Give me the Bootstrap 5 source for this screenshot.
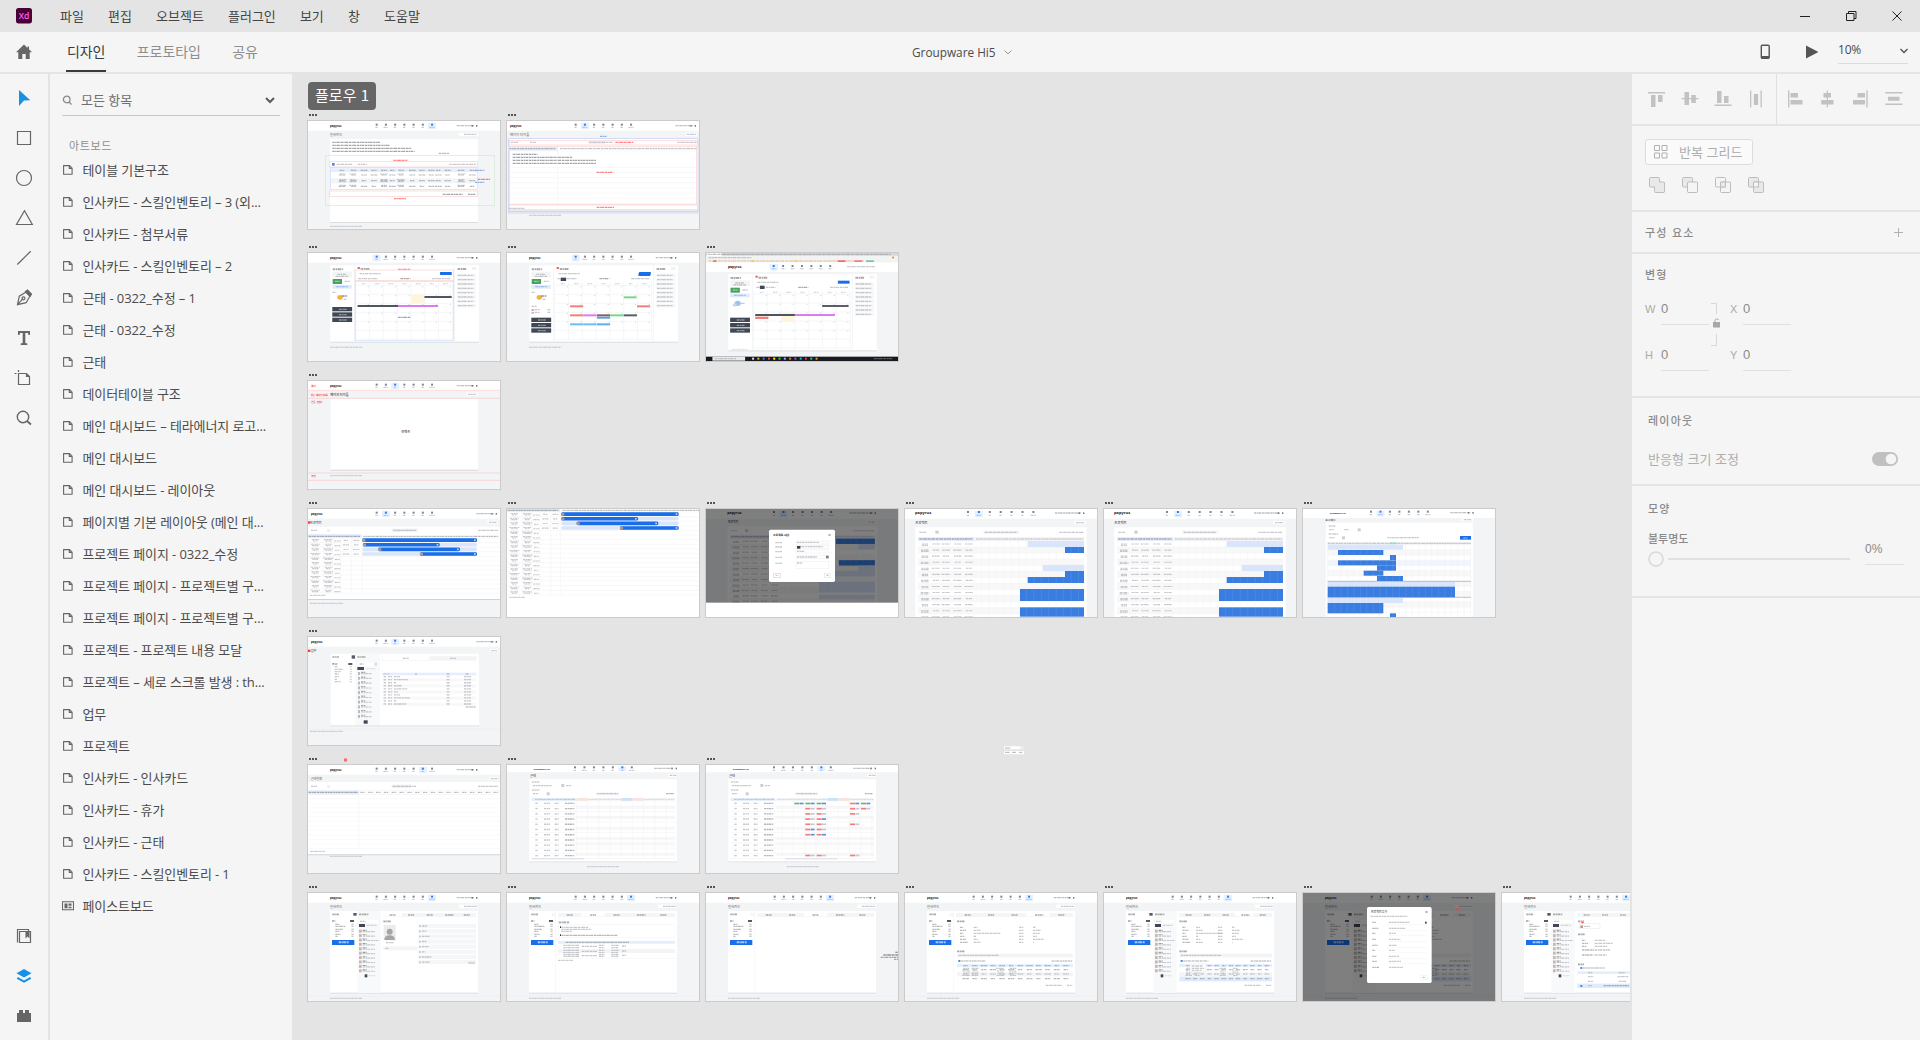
<!DOCTYPE html>
<html lang="ko">
<head>
<meta charset="utf-8">
<meta name="viewport" content="width=device-width, initial-scale=1">
<title>Groupware Hi5</title>
<link href="https://cdn.jsdelivr.net/npm/bootstrap@5.3.0/dist/css/bootstrap.min.css" rel="stylesheet">
<style>
  body{font-family:"Open Sans","Noto Sans CJK KR",sans-serif;font-size:13px;line-height:20px;color:#4b4b4b;background:#e4e4e4;overflow:hidden}
  svg{display:block;flex:none}
  .app{width:1920px;height:1040px}
  .titlebar{height:32px;background:#e4e4e4;padding:0 18px 0 16px}
  .menus{gap:24.1px;margin-left:28px;padding-bottom:1px;color:#444;font-family:"Noto Sans CJK KR",sans-serif}
  .modebar{height:42px;background:#f5f5f5;border-bottom:2px solid #e4e4e4;padding:0 12px 0 16px;position:relative}
  .modes{gap:31.5px;margin-left:34px;height:40px;font:14px/38px "Noto Sans CJK KR",sans-serif;color:#8e8e8e}
  .modes .on{color:#3a3a3a;box-shadow:inset 0 -2px #3a3a3a;padding:0 1px;margin-right:-1px}
  .modes span{letter-spacing:-.1px}
  .doc{position:absolute;left:912px;top:10px;gap:8px;color:#4b4b4b;font-size:11.8px}
  .zoomsel{width:70px;height:24px;border-bottom:1px solid #dcdcdc;margin-left:20px;line-height:20px;font-size:12px;letter-spacing:-.2px}
  .tools{width:50px;background:#f5f5f5;border-right:2px solid #e4e4e4;padding:4px 0}
  .tools svg{height:40px;width:48px}
  .layers{width:242px;background:#f5f5f5;padding:11px 12px 0}
  .find{height:31px;border-bottom:1px solid #c8c8c8;color:#6e6e6e;gap:9px;padding:0 5px 0 0}
  .caption{font-size:11px;letter-spacing:.6px;color:#8e8e8e;height:38px;padding:20px 0 0 7px;line-height:20px}
  .layer{height:32px;gap:9.5px;padding-left:1px;color:#4b4b4b;white-space:nowrap}
  .layer span{letter-spacing:-.1px}
  .canvas{position:relative;overflow:hidden;width:1338px;margin-right:2px;background:#e4e4e4}
  .flow{position:absolute;left:16px;top:8px;width:68px;height:28px;border-radius:4px;background:#666;color:#fff;font:15px/26px "Noto Sans CJK KR",sans-serif;text-align:center}
  .board{position:absolute;width:194px;height:110px;border:1px solid #cbcbcb;background:#fff}
  .board i{position:absolute;left:1px;top:-7px;width:8px;height:2px;background:repeating-linear-gradient(90deg,#555 0 2px,transparent 2px 3px)}
  .scrap{position:absolute;left:712px;top:672px}
  .props{width:288px;background:#f5f5f5;font-family:"Noto Sans CJK KR",sans-serif}
  .props section{border-bottom:2px solid #e4e4e4;position:relative}
  .head{font-size:11px;font-weight:500;letter-spacing:1.2px;color:#8a8a8a;line-height:20px}
  .aligns{height:52px}
  .repeat{width:108px;height:26px;border:1px solid #dcdcdc;border-radius:3px;background:#fafafa;color:#adadad;gap:11px;padding-left:8px;line-height:18px;padding-bottom:1px}
  .field{font:11px/20px "Liberation Sans",sans-serif;color:#aaa}
  .field b{font-weight:400;color:#8a8a8a;width:48px;height:26px;border-bottom:1px solid #e0e0e0;font-size:13px;padding-bottom:6px}
</style>
</head>
<body>
<div class="app d-flex flex-column">
  <header class="titlebar d-flex align-items-center">
    <svg width="16" height="16" viewBox="0 0 16 16"><rect width="16" height="15.4" rx="2.6" fill="#470137"/><text x="8" y="10.8" text-anchor="middle" font-family="Open Sans" font-weight="600" font-size="8.5" fill="#ff61f6">Xd</text></svg>
    <nav class="menus d-flex"><span>파일</span><span>편집</span><span>오브젝트</span><span>플러그인</span><span>보기</span><span>창</span><span>도움말</span></nav>
    <svg class="ms-auto" width="102" height="12" viewBox="0 0 102 12" fill="none" stroke="#222" stroke-width="1"><path d="M0 6.5h10M46.500 3.500h7.500v7h-7.500zM48.500 3.500v-2h7.500v7h-2M92.500 1.500l9 9M101.500 1.500l-9 9"/></svg>
  </header>
  <div class="modebar d-flex align-items-center">
    <svg width="16" height="16" viewBox="0 0 16 16" fill="#666"><path d="M8 .5L0 8.200h2.300V15h4v-5h3.400v5h4V8.200H16L13 5.300V2.500h-1.500v1.400z"/></svg>
    <nav class="modes d-flex"><span class="on">디자인</span><span>프로토타입</span><span>공유</span></nav>
    <div class="doc d-flex align-items-center"><span>Groupware Hi5</span><svg width="8" height="5" viewBox="0 0 8 5" fill="none" stroke="#999"><path d="M.5.5L4 4 7.500.5"/></svg></div>
    <svg class="ms-auto" width="58" height="16" viewBox="0 0 58 16"><rect x="1.300" y="1.300" width="7.900" height="13" rx="1" fill="none" stroke="#555" stroke-width="1.400"/><path d="M1 12h8v2.500H1zM46 1.500v13L58.300 8z" fill="#555"/></svg>
    <div class="zoomsel d-flex justify-content-between"><span>10%</span><svg class="mt-2" width="8" height="6" viewBox="0 0 8 6" fill="none" stroke="#555" stroke-width="1.400"><path d="M.5 1L4 4.500 7.500 1"/></svg></div>
  </div>
  <div class="d-flex flex-grow-1">
    <aside class="tools d-flex flex-column" id="tools"></aside>
    <aside class="layers">
      <div class="find d-flex align-items-center"><svg width="10" height="10" viewBox="0 0 10 10" fill="none" stroke="#8a8a8a" stroke-width="1.300"><circle cx="4.700" cy="4.500" r="3.300"/><path d="M7 7l2.500 2.500"/></svg><span>모든 항목</span><svg class="ms-auto" width="10" height="7" viewBox="0 0 10 7" fill="none" stroke="#5a5a5a" stroke-width="2"><path d="M1 1l4 4 4-4"/></svg></div>
      <div class="caption">아트보드</div>
      <div id="list"></div>
    </aside>
    <main class="canvas" id="canvas">
      <svg class="scrap" width="20" height="9" viewBox="0 0 60 27"><rect width="50" height="9" y="1" rx="2" fill="#fff"/><rect x="48" width="12" height="11" y="0" rx="5" fill="#eee"/><rect width="60" height="10" y="15" rx="2" fill="#fff"/><path d="M3 6h16M3 19h14M24 19h12M45 19h10" stroke="#b5b5b5" stroke-width="3"/></svg>
      <div class="flow">플로우 1</div>
    </main>
    <aside class="props">
      <section class="aligns d-flex">
        <svg width="288" height="50" viewBox="1632 74 288 50" fill="#c2c2c2"><path d="M1648 92h17v1.500h-17zM1651 95h4.500v12h-4.500zM1658 95h4.500v7h-4.500zM1681.500 98h17v1.200h-17zM1684.500 92h4.500v13h-4.500zM1691.300 95h4.500v8h-4.500zM1714.500 104.500h17v1.500h-17zM1717 91h4.500v12h-4.500zM1724 96h4.500v7h-4.500zM1750 90.500h1.300v17h-1.300zM1760.500 90.500h1.300v17h-1.300zM1753.800 94h4.300v11h-4.300zM1788 90.500h1.400v17h-1.400zM1790.500 93h7.500v4.500h-7.500zM1790.500 100h12v4.500h-12zM1826.800 90.500h1.200v17h-1.200zM1823.500 93h7.500v4.500h-7.500zM1821.200 100h12.300v4.500h-12.300zM1866.300 90.500h1.400v17h-1.400zM1857.500 93h7.500v4.500h-7.500zM1853 100h12v4.500h-12zM1885.300 92h17.200v1.400h-17.200zM1885.300 103.500h17.200v1.400h-17.200zM1888 96.800h11.500v4h-11.500z"/><path d="M1776 74h1v50h-1z" fill="#e0e0e0"/></svg>
      </section>
      <section style="height:86px" class="pt-1">
        <div class="repeat d-flex align-items-center" style="margin:9px 0 0 13px"><svg width="14" height="14" viewBox="0 0 14 14" fill="none" stroke="#b0b0b0"><path d="M.5.5h5v5h-5zM8 .5h5v5H8zM.5 8h5v5h-5zM8 8h5v5H8z"/></svg><span>반복 그리드</span></div>
        <svg style="margin:12px 0 0 17px" width="116" height="17" viewBox="0 0 116 17" fill="#e9e9e9" stroke="#bdbdbd"><path d="M.5 1.500q0-1 1-1h8q1 0 1 1V5h4q1 0 1 1v8.500q0 1-1 1h-8q-1 0-1-1V10h-4q-1 0-1-1z"/><rect x="33.500" y=".5" width="10" height="9.500" rx="1"/><rect x="38.500" y="5" width="10" height="10.500" rx="1" fill="#f5f5f5"/><g fill="none"><rect x="66.500" y=".5" width="10" height="9.500" rx="1"/><rect x="71.500" y="5" width="10" height="10.500" rx="1"/></g><path d="M71.500 5h5v5h-5z"/><rect x="99.500" y=".5" width="10" height="9.500" rx="1"/><rect x="104.500" y="5" width="10" height="10.500" rx="1"/><path d="M104.500 5h5v5h-5z" fill="#f5f5f5"/></svg>
      </section>
      <section style="height:42px;padding:0 17px 0 13px" class="d-flex align-items-center justify-content-between"><span class="head">구성 요소</span><svg width="9" height="9" stroke="#b0b0b0"><path d="M0 4.500h9M4.500 0v9"/></svg></section>
      <section style="height:144px;padding:10px 0 0 13px">
        <div class="head">변형</div>
        <div class="d-flex" style="margin-top:15px">
          <div class="d-flex flex-column" style="gap:20px"><div class="field d-flex"><span style="width:16px">W</span><b>0</b></div><div class="field d-flex"><span style="width:16px">H</span><b>0</b></div></div>
          <svg width="21" height="44" viewBox="0 0 21 44" fill="none" stroke="#d8d8d8" style="margin-top:4px"><path d="M2 .5h5.500V11M7.500 31v11.500H2"/><path d="M4 19h7v5.500H4z" fill="#a8a8a8" stroke="none"/><path d="M6 19v-1.200a1.900 1.900 0 0 1 3.700-.6" stroke="#a8a8a8"/></svg>
          <div class="d-flex flex-column" style="gap:20px"><div class="field d-flex"><span style="width:13px">X</span><b>0</b></div><div class="field d-flex"><span style="width:13px">Y</span><b>0</b></div></div>
        </div>
      </section>
      <section style="height:88px;padding:12px 22px 0 16px">
        <div class="head">레이아웃</div>
        <div class="d-flex justify-content-between align-items-center" style="margin-top:19px;color:#adadad">반응형 크기 조정<svg width="26" height="14" viewBox="0 0 26 14"><rect width="26" height="14" rx="7" fill="#c0c0c0"/><circle cx="19" cy="7" r="5.300" fill="#f5f5f5"/></svg></div>
      </section>
      <section style="height:112px;padding:12px 16px 0 16px">
        <div class="head">모양</div>
        <div class="d-flex justify-content-between"><div><div class="head" style="letter-spacing:0;margin-top:10px">불투명도</div><svg width="203" height="16" viewBox="0 0 203 16" fill="none" stroke="#d8d8d8" style="margin-top:3px"><circle cx="8" cy="8" r="7" stroke-width="1.500"/><path d="M20 8h182" stroke-width="1.600"/></svg></div>
        <div style="width:39px;height:26px;border-bottom:1px solid #e0e0e0;margin-top:21px;color:#8a8a8a;font:12px/20px 'Liberation Sans',sans-serif">0%</div></div>
      </section>
    </aside>
  </div>
</div>
<script>
// ---- tool strip -------------------------------------------------------
const tool = d => `<svg viewBox="0 0 48 40" fill="none" stroke="#666" stroke-width="1.200">${d}</svg>`;
const tools = [
  '<path d="M19 12l11.300 10.200-6.300.3L19 28z" fill="#1592e6" stroke="none"/>',
  '<path d="M17.500 13.500h13v13h-13z"/>',
  '<circle cx="24" cy="20" r="7.500"/>',
  '<path d="M24.500 12.800L32.300 26.500H16.500z"/>',
  '<path d="M17.300 26.500L30.700 13.200"/>',
  '<path d="M17.500 26.700l1.800-8.500 6.500-4 4 4-3.600 6.500zM17.500 26.700l5.500-6"/><circle cx="23.500" cy="20.300" r="1.500"/><path d="M25.500 13.500l2-1.500 4 4-1.300 2.200z" fill="#666"/>',
  '<path d="M18 13h12v4h-1.400l-.7-2h-2.600v10l2 .6V27h-6.600v-1.400l2-.6V15h-2.600l-.7 2H18z" fill="#666" stroke="none"/>',
  '<path d="M18.500 15.500h8l3 3v8h-11zM26.500 15.500v3h3M18.500 12v2M14.500 15.500h2"/>',
  '<circle cx="23" cy="19" r="5.700" stroke-width="1.400"/><path d="M27 23l4 3.500" stroke-width="1.800"/>'
];
const bottom = [
  '<path d="M17.500 26.500v-13h11v1.500M19.500 15.500h11v11h-11z"/><path d="M25.500 15.500h4v7l-2-2-2 2z" fill="#666" stroke="none"/>',
  '<path d="M24 13l7.500 4.300L24 21.600l-7.500-4.300z" fill="#1592e6" stroke="none"/><path d="M17.300 21.800L24 25.700l6.700-3.900" stroke="#1592e6" stroke-width="2"/>',
  '<path d="M17 17h2v-3h4v3h2v-3h4v3h2v9H17z" fill="#666" stroke="none"/>'
];
document.getElementById('tools').innerHTML = tools.map(tool).join('') + '<div class="mt-auto">' + bottom.map(tool).join('') + '</div>';

// ---- layer list -------------------------------------------------------
const boardIcon = '<svg width="10" height="10" viewBox="0 0 10 10" fill="none" stroke="#666" stroke-width="1.100"><path d="M.6.6h5.900l2.600 2.600v6H.6zM6.300.6v2.800h2.800"/></svg>';
const pasteIcon = '<svg width="12" height="10" viewBox="0 0 12 10" style="margin:0 -1px 0 -1px"><path d="M.5.800h11v8H.5z" fill="none" stroke="#666" stroke-width="1.100"/><path d="M2.500 2.500h3v4.700h-3zM6.500 2.500h3v2.200h-3zM6.500 5.700h3v1.500h-3z" fill="#666"/></svg>';
const names = ['테이블 기본구조','인사카드 - 스킬인벤토리 – 3 (외...','인사카드 - 첨부서류','인사카드 - 스킬인벤토리 – 2','근태 - 0322_수정 – 1','근태 - 0322_수정','근태','데이터테이블 구조','메인 대시보드 – 테라에너지 로고...','메인 대시보드','메인 대시보드 - 레이아웃','페이지별 기본 레이아웃 (메인 대...','프로젝트 페이지 - 0322_수정','프로젝트 페이지 - 프로젝트별 구...','프로젝트 페이지 - 프로젝트별 구...','프로젝트 - 프로젝트 내용 모달','프로젝트 – 세로 스크롤 발생 : th...','업무','프로젝트','인사카드 - 인사카드','인사카드 - 휴가','인사카드 - 근태','인사카드 - 스킬인벤토리 - 1','페이스트보드'];
document.getElementById('list').innerHTML = names.map((n,i)=>`<div class="layer d-flex align-items-center">${i===23?pasteIcon:boardIcon}<span>${n}</span></div>`).join('');

// ---- artboard thumbnails: 576 x 324 units drawn at one third ----------
let out = '';
const put = s => { out += s; };
const R = (x,y,w,h,f,s) => put(`<rect x="${x}" y="${y}" width="${w}" height="${h}" fill="${f||'none'}"${s?` stroke="${s}" stroke-width="2"`:''}/>`);
const T = (x,y,w,c='#a3a7ad',h=4) => put(`<path d="M${x} ${y}h${w}" stroke="${c}" stroke-width="${h}" stroke-opacity=".62" stroke-dasharray="7 1.500 4 1 9 2"/>`);
const W = (x,y,t,s=10,c='#666',b=400) => put(`<text x="${x}" y="${y}" font-size="${s}" fill="${c}" font-weight="${b}">${t}</text>`);
const grid = (xs,ys,w=18,c) => ys.forEach((y,j)=>xs.forEach((x,i)=>{const k=w*(.7+.3*((i*7+j*3)%5)/4);T(x-k/2,y,k,c,3.4);}));
const seq = (a,n,d) => Array.from({length:n},(_,i)=>a+i*d);
const lines = (x0,x1,ys,c='#f0f1f3') => ys.forEach(y=>put(`<path d="M${x0} ${y}H${x1}" stroke="${c}" stroke-width="1.500"/>`));
const vlines = (xs,y0,y1,c='#f0f1f3') => xs.forEach(x=>put(`<path d="M${x} ${y0}V${y1}" stroke="${c}" stroke-width="1.500"/>`));
const RED='#f33', PINK='#fbd0d0', BLUE='#1a6fe8', MID='#3a7de0', PALE='#d8e5fb', HEAD='#e4eefd', DARK='#3f4854', BG='#f2f4f6', CELL='rgba(255,255,255,.16)';

function nav(o){
  const n = Object.assign({logo:66,text:'papyrus',first:206,step:27.7,act:0,right:446,rw:52,h:29,cy:11,ty:19,bg:BG,ls:8.4},o);
  R(0,0,576,324,n.bg); R(0,0,576,n.h,'#fff');
  W(n.logo,n.cy+7,n.text,n.ls,'#222',700);
  for(let i=0;i<7;i++){
    const x=n.first+i*n.step, on=i===n.act;
    if(on) R(x-12,5,24,n.h-9,'#e6f0ff');
    R(x-3,n.cy-3,6,6,on?'#2f7bf0':'#7c8593'); const w=i===6?16:i===1?14:8;
    T(x-w/2,n.ty,w,on?'#6aa0f5':'#999',3);
  }
  T(n.right,n.cy+3,n.rw,'#999'); R(n.right+n.rw-7,n.cy+1,4,5,'#777'); R(n.right+n.rw+6,n.cy+1,4,5,'#777');
}
const foot = (x=66,y=316) => { lines(0,576,[310],'#e9ebed'); T(x,y,98,'#a4a8ac',3); };
const canvas = document.getElementById('canvas');
const rowY = [121,253,381,509,637,765,893];
function board(col,row,ox,oy,sx,opt,draw){
  out=''; if(opt) nav(opt);
  put(`<g transform="scale(${1/sx} 1) translate(${-ox} ${-oy})">`); draw(); put('</g>');
  const d=document.createElement('div'); d.className='board';
  d.style.left=(308+199*col-293)+'px'; d.style.top=(rowY[row]-75)+'px';
  d.innerHTML=`<i></i><svg width="192" height="108" viewBox="0 0 576 324" font-family="Open Sans,Noto Sans CJK KR,sans-serif">${out}</svg>`;
  canvas.appendChild(d);
}

// row 1: table structure
board(0,0,24,153,1,{act:6},()=>{
  W(90,198,'인사카드'); R(476,188,58,10,'#fff'); T(492,193,38);
  R(90,207,444,250,'#fff'); R(90,456,444,3,'#dcdfe2');
  [143,173,237,247].forEach((w,i)=>T(97,217+i*9,w,'#6b6f74'));
  T(416,250,32,'#2fa83f',3); R(76,256,508,150,'','#d3e9d3');
  T(280,271,42,RED,3.5); R(88,275,445,16,'',PINK);
  R(96,279,8,8,'#4c88e8'); T(110,283,46); T(173,283,28); T(448,283,82);
  R(92,295,440,11,HEAD); R(92,325,440,15,'#f3f4f6');
  const c=[126,161,192,222,252,277,304,337,366,394,415,443,483,517];
  grid(c,[301,315,332,349],20,'#858a92'); grid([128,158,252,302,484],[312,329,346,335],24); R(91,293,441,65,'','#c9dcf8');
  T(525,301,28,'#2c70e8',3); T(533,328,38,RED,3.5); T(525,337,28,'#2c70e8',3);
  R(88,363,445,16,'',PINK); T(428,373,60,'#6b6f74'); T(504,373,22,'#6b6f74'); T(282,386,36,RED,3.5); T(90,469,98,'#a4a8ac',3);
});
board(1,0,621,153,1,{act:1,logo:9,right:505},()=>{
  W(630,198,'페이지 타이틀'); R(1156,188,34,10,'#fff'); T(1160,193,28); T(900,199,20,'#2c70e8',3);
  R(626,206,568,216,'#fff'); R(626,206,568,223,'','#c3c9f5'); R(628,211,564,14,'',PINK);
  T(632,217,22); T(690,217,18); R(864,213,52,9,'#f1f3f5'); T(868,217,70); T(946,217,54,RED,3.5); T(1132,217,60);
  R(624,230,150,12,HEAD); T(626,236,140,'#858a92'); T(780,236,410,'#858a92',3); lines(626,1192,[243]);
  [75,180,250,250].forEach((w,i)=>T(638,253+i*9,w,'#6b6f74'));
  lines(628,1190,seq(292,8,15.5)); vlines([773],230,402); R(628,229,562,174,'',PINK);
  T(890,307,50,RED,3.5); R(628,405,564,14,'',PINK); T(890,412,52,RED,3.5); T(628,415,45); R(626,422,568,3,'#c4c8cc'); T(687,436,98,'#a4a8ac',3);
});

// row 2: calendar dashboards
function calendar(dx,dy,v){
  const r=(x,y,w,h,f,s)=>R(x+dx,y+dy,w,h,f,s), t=(x,y,w,c,h)=>T(x+dx,y+dy,w,c,h);
  r(78,76,61,230,'#fff'); r(141,76,255,230,'#fff'); r(398,76,62,230,'#fff'); r(78,305,382,3,'#dcdfe2');
  t(84,88,27,'#777',6); r(83,95,51,17,'#f3f4f5'); t(96,103,22); t(92,109,32);
  r(84,117,24,15,'#48a35c'); t(90,124,12,'#cfe8d4'); t(115,124,14); r(83,135,50,11,'#dfeafd'); t(93,140,30,'#7aa8ef');
  r(148,81,6,6,'#e66'); t(156,87,24,'#777',6); t(405,87,22,'#777',6); r(442,81,12,9,'#f1f2f3');
  seq(106,8,13).forEach(y=>{r(403,y-5,50,10,'#f6f7f8');t(406,y,40);});
  const m=v===1?[233,249,265]:v===2?[207,223,239]:[201,217,233];
  m.forEach(y=>{r(83,y,51,13,DARK);t(100,y+7,20,'#c4cad0');});
  t(153,101,54); r(360,96,30,9,BLUE); t(258,116,26,'#777'); t(150,116,50); t(340,116,46);
  grid(seq(164,7,35).map(x=>x+dx),[131+dy],14,'#c0c4c8');
  lines(143+dx,393+dx,seq(136+dy,7,27),'#eceef0'); vlines(seq(143,8,35.500).map(x=>x+dx),126+dy,300+dy,'#eceef0');
  seq(139,5,26.5).forEach(y=>seq(174,7,35).forEach(x=>r(x,y,3,3,'#d4d7da')));
}
board(0,1,20.6,39,.8568,{act:0},()=>{
  calendar(0,0,0); R(142,90,253,32,'',PINK); T(252,88,32,RED,3);
  put('<circle cx="103" cy="172" r="7" fill="#f6b13d"/>'); T(108,168,14,'#555'); T(112,178,8); T(83,157,10);
  R(286,163,34,26,'#fdf5dc'); R(320,168,70,6,'#50565e'); R(148,195,104,6,'#50565e'); R(252,195,103,6,'#dd7bf0');
  T(252,232,32,'#2c70e8',4); R(142,124,253,177,'','#cfe0f8'); lines(20,514,[316]); T(78,322,83,'#a4a8ac',3);
});
board(1,1,532,39,.8568,{act:0},()=>{
  calendar(511.5,0,1);
  put('<circle cx="615" cy="172" r="7" fill="#f6b13d"/>'); T(620,168,14,'#555'); T(624,178,8); T(595,157,10); T(595,199,14);
  R(595,208,6,5,'#f08a8a'); T(603,209,14); R(595,216,6,5,'#8cc8f5'); T(603,217,14); T(636,209,8); T(636,217,8);
  R(870,99,30,9,BLUE); R(670,113,14,10,DARK);
  [[832,169,33,'#79d68a'],[694,196,34,'#f08080'],[866,196,34,'#f08080'],[694,223,34,'#f08080'],[728,223,34,'#dd7bf0'],[763,223,34,'#8a5a68'],[797,223,34,'#79d68a'],[832,223,34,'#5a5f66'],[763,230,34,'#5a9fd6'],[694,250,34,'#6cbcf5'],[728,250,34,'#6cbcf5'],[763,250,34,'#5ab0ee']].forEach(a=>R(a[0],a[1],a[2],6,a[3]));
  lines(532,1026,[316]); T(589,322,83,'#a4a8ac',3);
});
board(2,1,1043.5,39,.8568,{act:0,h:60,cy:36,ty:46,logo:67,ls:10,right:424,rw:80},()=>{
  R(1043,67,494,29,'#fff'); put('<text transform="translate(1100 84) scale(.857 1)" font-size="10" font-weight="700" fill="#222">papyrus</text>');
  R(1207,72,22,20,'#e6f0ff'); seq(1218,7,24.2).forEach((x,i)=>{R(x-3,75,5,6,i?'#7c8593':'#2f7bf0');T(x-5,86,10,i?'#999':'#6aa0f5',3);}); T(1406,80,72);
  R(1043,39,494,28,'#f1f3f4'); R(1043,39,494,8,'#d4d7db'); R(1046,39,38,9,'#fff'); T(1048,43,470,'#92979d',4); T(1050,53,110); T(1050,63,400,'#e3b489',4);
  [[1062,'#f66'],[1160,'#fc5'],[1200,'#fd8'],[1270,'#fc5'],[1382,'#f66'],[1425,'#f77'],[1455,'#6c9']].forEach(a=>R(a[0],61,a[0]>1370?20:8,5,a[1]));
  R(1522,50,5,5,'#f80');
  R(1043,96,494,255,BG); calendar(1022.5,26,2);
  R(1182,137,12,10,DARK); put('<circle cx="1125" cy="190" r="8" fill="#9cc3f0"/><circle cx="1117" cy="195" r="5" fill="#c6d8ee"/>'); T(1134,190,10);
  R(1238,218,34,28,'#fdf5dc'); R(1342,195,68,6,'#5a5f66'); R(1170,222,102,6,'#50565e'); R(1272,222,103,6,'#dd7bf0'); R(1170,230,34,7,'#f08080');
  T(1110,328,40,'#d0d3d6'); R(1043,350,494,13,'#171a1e'); R(1060,350,84,12,'#e9eaeb'); T(1066,356,55);
  ['#e8e8e8','#f7b500','#2d8cff','#e5484d','#ff0','#4fc06f','#aaf','#f36f3c','#7b61ff','#1db4f0','#f02e65','#31c48d','#f90'].forEach((c,i)=>R(1162+i*13.6,353,5,6,c)); T(1475,356,48,'#888');
});

// row 3: page layout
board(0,2,24,33,1,{act:2},()=>{
  W(34,52,'헤더',7,RED,700); W(33,76.5,'상단 - 페이지 타이틀',6,RED,700); W(91,78,'페이지 타이틀',9.5,'#333',500); W(34,100,'본문 - 컨텐츠',6,RED,700);
  R(500,68,34,9,'#fff'); T(504,73,26); lines(24,600,[61,85,309,331],'#fbb');
  R(92,87,442,213,'#fff'); R(92,299,442,4,'#dcdfe2'); W(304,189,'컨텐츠',9.5,'#333',500); W(34,322,'푸터',7,RED,700); T(90,317,98,'#a4a8ac',3);
});

// row 4: project pages
function gantt(dx,dy,x0,seg){
  seg.forEach((s,i)=>{ const y=505+dy+i*13.8;
    put(`<rect x="${x0+dx}" y="${y}" width="${seg[0][1]}" height="11" rx="5" fill="${PALE}"/><rect x="${s[0]+dx}" y="${y}" width="${s[1]}" height="11" rx="4" fill="${BLUE}"/>`);
    R(s[0]+dx,y+2,9,8,'#b09a90'); R(s[0]+s[1]+dx-9,y+3,5,5,'#bcd4fa'); });
}
board(0,3,24,417,1,{act:1,logo:9,right:505},()=>{
  R(24,454,7,7,RED); W(30,462,'프로젝트',9.5,'#444'); R(562,452,32,9,'#fff'); T(567,457,24);
  R(24,470,576,218,'#fff'); R(24,687,576,3,'#cfd2d6'); T(33,481,18); R(81,477,9,9,'#eef0f2'); R(275,476,78,10,'#eef1f4'); T(280,481,68); T(535,481,60);
  R(24,492,162,12,HEAD); T(26,499,154,'#7a8088'); T(190,499,405,'#7a8088',3); lines(24,600,seq(504,13,13.8)); vlines([70,98,122,154,186],504,670);
  grid([46,85],seq(509,12,13.8),30); grid([46,85,112],seq(513,12,13.8),20); grid([138,169],seq(511,4,13.8),20);
  gantt(0,0,187,[[187,344],[189,230],[235,245],[360,171]]); T(30,676,46,'#999',3); T(30,700,100,'#a4a8ac',3);
});
board(1,3,621,417,1,null,()=>{
  R(621,417,576,324,'#fff'); R(621,417,160,9,HEAD); T(623,421,152,'#7a8088'); T(787,421,410,'#7a8088',3);
  lines(621,1197,seq(426,19,13.8)); vlines([667,695,720,752,781],426,674);
  grid([643,682],seq(431,18,13.8),30); grid([643,682,709],seq(435,18,13.8),20); grid([736,766],seq(433,4,13.8),20);
  gantt(597,-78,187,[[187,352],[187,230],[233,245],[363,176]]); T(628,682,46,'#999',3);
});
function plan(dx,rows){
  R(646+dx,112,514,270,'#fff'); W(646+dx,101,'프로젝트',10,'#333'); R(1122+dx,93,36,10,'#fff'); T(1128+dx,98,26);
  T(658+dx,127,20); R(706+dx,122,10,9,'#ccd0d4'); R(850+dx,121,108,11,'#f5f6f7'); T(854+dx,127,98); T(1078+dx,127,72);
  R(654+dx,141,168,12,HEAD); R(822+dx,141,330,12,'#f3f4f6'); T(658+dx,147,160,'#7a8088'); T(828+dx,147,322,'#b5b9be');
  for(let i=0;i<13;i++){ const y=153+i*18.2; if(i%2) R(654+dx,y,498,18,'#f8f8f9'); }
  lines(654+dx,1152+dx,seq(153,13,18.200)); vlines(seq(822,15,22.400).map(x=>x+dx),153,380,'#f4f5f6');
  grid([675,708,738,773,807].map(x=>x+dx),seq(162,13,18.200),26); grid([675].map(x=>x+dx),seq(166,13,18.2),26);
  rows.forEach(r=>{R(r[0]+dx,r[1],1152-r[0],r[2],r[3]);});
  vlines(seq(979,8,22.400).map(x=>x+dx),153,380,CELL);
}
const planRows=[[983,153,18,PALE],[1095,171,18,MID],[1028,225,18,PALE],[1095,243,19,MID],[983,261,18,MID],[960,297,36,MID],[960,352,28,MID]];
const big={first:189,step:32.7,act:1,logo:30,ls:12,right:450,rw:78,cy:9,ty:19};
board(2,3,18,57,1,{...big,first:204,step:28.6,logo:64,ls:10.5,right:430,rw:70},()=>{
  put('<g transform="translate(-481 8) scale(.873 .9)">');
  plan(0,[[1018,153,18,MID],[1095,171,18,PALE],[1028,225,18,MID],[1095,243,19,PALE],[960,261,18,PALE],[960,297,36,PALE],[960,340,16,PALE]]); put('</g>');
  R(18,57,576,324,'rgba(0,0,0,.5)'); R(18,338,576,43,'#fff');
  put('<rect x="207" y="119" width="198" height="157" rx="5" fill="#fff"/>'); W(219,138,'프로젝트 내용',8.5,'#333',600); T(385,135,7,'#555');
  [158,171,185,202,220].forEach((y,i)=>{T(226,y,20);R(288,y-5,98,i===4?20:9,'',"#f0f1f2");T(291,y-1,[66,78,22,60,16][i]);});
  R(291,168,10,8,'#333d4b'); R(378,197,8,8,'#7a8088'); R(221,251,20,11,'','#f8c4c4'); T(226,256,10,'#f99'); R(373,251,19,11,'','#e2e4e6'); T(379,256,8);
});
board(3,3,615,57,1,big,()=>plan(0,planRows));
board(4,3,42,57,1,big,()=>{ plan(-573,planRows); });
board(5,3,639,57,1,{first:204,step:28.4,act:1,logo:80,text:'Groupware Hi5',ls:6.5,right:442,rw:60,h:27,cy:8,ty:17},()=>{
  W(706,92,'프로젝트',8.5,'#333'); R(1116,84,34,9,'#fff'); T(1121,89,24); R(707,98,442,284,'#fff');
  T(716,108,20,'#888',3); T(718,119,14); T(763,119,14); R(803,115,9,9,'#ccd0d4'); T(716,132,28,'#888',3); T(718,143,16); R(756,139,9,9,'#ccd0d4'); T(892,143,94); R(1110,138,33,11,BLUE); T(1120,144,12,'#bcd4fa');
  R(713,156,430,8,'#f3f4f6'); R(900,156,18,8,'#bfeede'); T(713,160,430,'#a8adb3'); for(let i=0;i<6;i++)R(713,180+i*31.200,430,15,'#f8f8f9'); R(713,211,430,15,'#f1f5fe');
  lines(713,1143,seq(164,14,15.6)); vlines(seq(713,23,19.5),164,380);
  [[713,164,226,15,PALE],[744,180,136,15,MID],[900,195,18,15,MID],[744,211,174,15,MID],[861,226,57,16,MID],[821,242,59,15,MID],[861,258,78,15,MID],[713,274,382,16,PALE],[713,290,382,32,MID],[713,323,226,16,PALE],[713,339,167,31,MID],[900,370,18,11,MID]].forEach(a=>R(...a));
  lines(713,1143,[274,322],'#888'); vlines(seq(733,19,19.500),164,380,CELL);
});

// row 5: work page
board(0,4,24,51,1,{act:2,logo:9,right:505},()=>{
  R(24,89,7,7,RED); W(32,97,'업무',9.5,'#444'); R(570,87,24,9,'#fff'); T(574,92,17);
  R(92,101,445,216,'#fff'); R(166,101,74,216,'#f8f9fa'); R(92,316,445,3,'#e2e5e8'); T(97,111,20,'#777',5); R(155,106,10,10,'#555c66'); T(172,111,26,'#777',5);
  R(97,129,5,5,'#5a9df0'); T(104,132,10,'#777'); R(145,129,12,6,'#555c66'); [[140,10],[148,26],[155,18],[162,12],[170,14],[178,8],[185,18]].forEach(a=>{T(104,a[0],a[1]);T(149,a[0],7,'#c0c4c8');});
  R(176,127,55,11,'#fff'); T(179,132,12); R(223,128,8,9,'#dcdfe2'); R(172,141,20,9,DARK); T(199,146,28,'#d0d3d6');
  seq(159,10,14.3).forEach(y=>{R(174,y-3,6,9,'#bbb');T(183,y-2,14,'#777',3.5);T(183,y+2,32,'#a3a7ad',3.500);}); R(191,301,12,10,DARK);
  R(247,109,283,13,'#f3f4f6'); R(248,109,139,11,'#fff'); T(308,115,18); T(450,115,18);
  R(247,158,282,8,HEAD); T(250,162,18,'#a8b0bc',3); T(345,162,6); T(440,162,10); T(497,162,10); seq(170,10,9.100).forEach((y,i)=>{if(i%2)R(247,y-4,282,9,'#f8f8f9');T(251,y,7);T(264,y,13);T(282,y,[18,42,6,23,40,12,18,48,7,38][i]);T(440,y,10);T(492,y,21);}); T(497,261,30);
  lines(24,600,[328],'#e9ebed'); T(30,334,100,'#a4a8ac',3);
});

// row 6: attendance
board(0,5,24,435,1,{act:5},()=>{
  W(32,480,'근태현황',9.5,'#666'); R(568,471,26,9,'#fff'); T(572,476,20); R(24,486,576,217,'#fff'); R(24,702,576,4,'#dcdfe2');
  T(33,499,18); R(81,495,9,9,'#eef0f2'); R(275,494,58,10,'#eef1f4'); T(278,499,70); T(534,499,60); R(24,511,152,13,HEAD); T(26,517,150,'#7a8088'); seq(181,18,23.5).forEach(x=>T(x,517,14,'#7a8088',3)); lines(24,600,[511,524]);
  vlines(seq(176,19,23.5),511,524); lines(24,600,seq(536,12,13.600),'#f3f4f6'); vlines([176],524,685); T(31,694,44,'#999',3); T(90,709,98,'#a4a8ac',3);
});
function attend(dx,v){
  W(690+dx,470,'근태',9.5,'#333'); R(1104+dx,462,26,9,'#fff'); T(1109+dx,466,20); R(688+dx,478,443,247,'#fff'); R(688+dx,724,443,3,'#e2e5e8');
  T(696+dx,486,22,'#888',3); T(699+dx,497,58); R(784+dx,492,9,9,'#ccd0d4'); T(798+dx,497,16); T(696+dx,510,22,'#888',3); T(699+dx,521,16); R(740+dx,517,9,9,'#ccd0d4'); R(887+dx,517,70,9,'#f4f5f6'); T(892+dx,521,62); T(1098+dx,521,24,'#888');
  R(695+dx,534,134,9,HEAD); R(829+dx,534,296,9,'#f6f7f8'); T(705+dx,538,120,'#9aa4b2',3); T(835+dx,538,288,'#c0c4c8',3);
  const h=v?{5:'#c8e2fb',6:'#fbe1dc'}:{0:'#fbe1dc',4:'#c8e2fb',5:'#fbe1dc'};
  for(const k in h) R(829+dx+k*33.600-(v?12:0),534,33,9,h[k]);
  [559,590,622,653,669,700].forEach(y=>R(829+dx,y-1,296,9,'#f8f8f9'));
  seq(550,11,15.7).forEach(y=>{T(706+dx,y,8);T(732+dx,y,18);T(764+dx,y,12);T(795+dx,y,28,'#85898f');});
  lines(695+dx,1125+dx,seq(543,12,15.700)); vlines(seq(829+(v?21:0),v?9:10,33.600).map(x=>x+dx),534,714);
  R(695+dx+(v?163:0),714,158,4,'#dfe3e8'); T((v?863:861)+dx,740,96,'#a4a8ac',3);
}
const hi5={act:5,logo:80,text:'Groupware Hi5',ls:6.5,first:204,step:28.4,right:442,rw:58,h:22,cy:7,ty:16};
board(1,5,621,435,1,hi5,()=>attend(0,0));
board(2,5,18,75,1,hi5,()=>{
  put('<g transform="translate(0 -360)">'); attend(-603,1); put('</g>');
  const g='#63b37a',r='#f47c7c',b='#5f8fd8',n='#c6cad0';
  [[283,0,g,b],[316,0,g,b],[350,0,g,b],[450,0,r,b],[483,0,g,b],[316,1,r,n],[350,1,r,n],[450,1,r,n],[483,1,r,n],[316,2,r,n],[350,2,r,n],[450,2,r,n],[316,3,r,n],[350,3,r,b],[316,4,r,n],[350,4,r,n],[450,4,r,n],[316,5,r,b],[350,5,r,n],[316,6,r,b],[350,6,r,b],[316,10,r,n],[350,10,r,n],[450,10,r,n]].forEach(a=>{R(a[0],188+a[1]*15.600,15,5,a[2]);R(a[0]+16,188+a[1]*15.600,12,5,a[3]);});
});

// row 7: personnel cards, shared parts in artboard units
function person(tab,people){
  W(66,46,'인사카드',10,'#666'); R(454,35,56,10,'#fff'); T(468,40,40);
  R(66,54,444,246,'#fff'); R(66,299,444,3,'#dcdfe2'); T(73,64,20,'#777',5); T(72,84,10,'#666',5); R(126,81,12,6,'#555c66');
  [[94,12],[100,30],[109,22],[115,12],[124,16],[130,8]].forEach(a=>{T(82,a[0],a[1],'#8b8f94',3.5);T(130,a[0],7,'#a3a7ad');});
  put('<rect x="72" y="141" width="67" height="15" rx="1" fill="'+BLUE+'"/>'); T(92,148,30,'#fff',6);
  const x0=people?226:153;
  if(people){ R(148,54,70,246,'#f8f9fa'); R(136,60,10,8,'#555c66'); T(153,64,28,'#777',5); R(153,81,58,9,'#fff'); T(156,85,16); R(153,93,18,9,DARK); T(176,97,30,'#b8bcc2');
    seq(114,10,13.200).forEach((y,i)=>{R(153,y-4,8,9,'#c9b6b0');T(164,y-2,12,'#666',3.5);T(164,y+2,i===2?50:38,'#a3a7ad',3.5);}); R(170,244,8,9,DARK); T(182,248,20,'#d0d3d6'); }
  else { R(137,61,7,7,'','#eee'); vlines([146],54,300); }
  R(x0,60,504-x0,12,'#f4f5f7'); const w=(504-x0)/5; R(x0+tab*w,60,w,10,'#fff'); for(let i=0;i<5;i++) T(x0+i*w+w/2-9,66,i===3?26:18,'#75797f',5);
  foot();
}
function infoTable(x0,x1,rows3){
  T(x0,85,24,'#777',5); [103,112,121,130,139,148].forEach((y,i)=>{T(x0+9,y,[10,18,10,14,18,24][i],'#8b8f94');T(x0+50,y,[12,20,80,8,14,20][i]);T(x1-162,y,14);T(x1-120,y,[8,24,20,12,32,2][i]);});
  T(x0,175,24,'#777',5); R(x0,182,x1-x0,11,'#f3f4f6'); T(x0+5,187,120); R(x0+4,201,6,6,'#4c88e8'); T(x0+12,204,75); T(x1-64,204,62);
  R(x0,213,x1-x0,9,HEAD); R(x0,238,x1-x0,12,'#f3f4f6'); if(rows3) R(x0,251,x1-x0,14,'#dfeafd');
  const n=12, d=(x1-x0-20)/n; grid(seq(x0+26,n,d),[218,230,243,257],d*.7,'#858a92'); grid([x0+28,x0+54,x0+130,x0+168],[226,234,240,247],d*.9); T(x1-82,277,50); T(x1-18,277,16);
}
board(0,6,24,39,1,{act:6},()=>{
  put('<g transform="translate(24 39)">'); person(0,true); put('</g>');
  T(250,124,24,'#777',5); R(251,135,36,46,'#ececec'); put('<circle cx="269" cy="155" r="9" fill="#a5a5a5"/><path d="M253 180q0-14 16-14t16 14z" fill="#a5a5a5"/>'); T(258,188,22); R(250,199,102,12,'#f3f4f6'); T(256,205,10);
  seq(134,8,15.500).forEach((y,i)=>{R(354,y-2,174,12,'#f5f6f8');R(357,y+2,6,5,'#c8ccd0');T(366,y+4,[16,14,24,14,20,10,28,24][i]);}); R(505,245,20,7,'#d4d7db');
});
board(1,6,621,39,1,{act:6},()=>{
  put('<g transform="translate(621 39)">'); person(1,false); put('</g>');
  T(776,127,32,'#777',5); R(776,134,349,38,'','#f4f5f6'); T(784,142,82); T(784,148,90); T(784,154,32); T(784,166,168,'#888'); R(780,139,3,5,'#333');R(780,163,3,5,'#333');
  R(774,183,351,8,HEAD); T(797,187,190,'#85898f'); R(774,207,351,12,'#f3f4f6'); [[196,203],[211,218],[224,229]].forEach(p=>{T(790,p[0],48);T(845,p[0]+3,46);T(897,p[0],16);T(934,p[0],22);T(966,p[0]+2,12);T(790,p[1],48);T(897,p[1],16);T(934,p[1],20);}); lines(774,1125,[235]); T(774,241,45,'#999',3);
});
board(2,6,18,459,1,{act:6},()=>{
  put('<g transform="translate(18 459)">'); person(2,false); put('</g>'); T(586,637,8,'#555'); T(550,645,44,'#555'); T(542,652,52,'#777'); T(582,658,12,'#777');
});
board(3,6,0,0,1,{act:6},()=>{ person(3,false); infoTable(156,504,false); });
board(4,6,0,0,1,{act:6},()=>{ person(3,true); infoTable(226,504,true); R(258,213,48,24,'#fff','#e8eaec'); T(263,219,34); T(263,226,38); T(263,232,30); });
board(5,6,0,0,1,{act:6},()=>{
  person(3,true); infoTable(226,504,true); R(0,0,576,324,'rgba(0,0,0,.5)'); R(460,45,8,7,'#c55');
  put('<rect x="192" y="42" width="194" height="228" rx="5" fill="#fff"/>'); W(203,61,'프로젝트추가',9,'#333'); T(203,70,110); T(367,57,7,'#555');
  [88,106,121,139,157,172,190,205,223].forEach((y,i)=>{T(208,y,[11,18,10,11,16,9,12,14,20][i],'#85898f');T(258,y,[62,50,20,34,24,18,30,36,42][i]);if(i<8)lines(256,372,[y+7]);}); R(366,86,5,6,'#444'); put('<rect x="352" y="247" width="22" height="12" rx="3" fill="#fff" stroke="#ddd"/>'); T(358,253,9);
});
board(6,6,0,0,1,{act:6},()=>{
  person(0,true); R(226,60,350,12,'#f4f5f7'); T(245,66,18,'#85898f',5); T(300,66,18,'#85898f',5); T(354,66,18,'#85898f',5);
  T(228,85,18,'#777',5); R(239,87,5,6,RED); R(232,92,62,14,'#fff','#eceef0'); R(235,97,8,8,'#b59f98'); T(246,100,18); T(228,124,20,'#777',5);
  [142,151,160,171,186].forEach((y,i)=>{T(240,y,[10,18,14,36,34][i],'#8b8f94');T(278,y,[32,54,38,46,36][i]);}); T(228,214,18,'#777',5); R(235,222,6,6,'#4c88e8'); T(243,225,65);
  R(226,235,350,8,HEAD); T(258,239,14); T(350,239,18); T(258,251,16);T(346,251,34); T(258,265,16); T(350,265,24); R(226,272,350,13,'#dfeafd'); T(258,278,12); T(305,278,76,'#7a8088'); R(235,276,6,6,'#4c88e8');
});
// red note pinned above the attendance board
canvas.insertAdjacentHTML('beforeend','<svg style="position:absolute;left:52px;top:684px" width="4" height="4"><rect width="3" height="3" y=".5" fill="#f66"/></svg>');
</script>
<script src="https://cdn.jsdelivr.net/npm/bootstrap@5.3.0/dist/js/bootstrap.bundle.min.js"></script>
</body>
</html>
